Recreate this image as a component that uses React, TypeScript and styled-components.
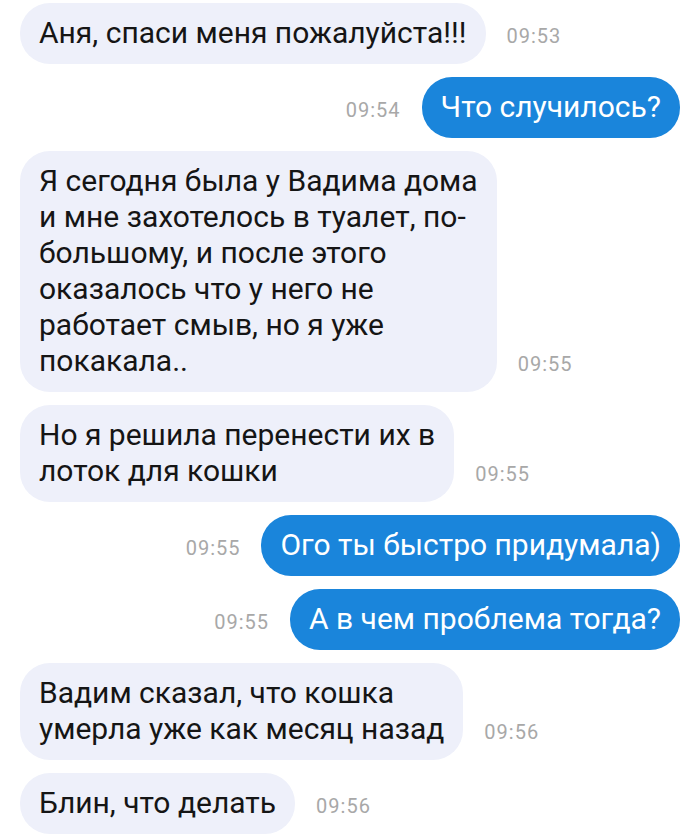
import styled, { createGlobalStyle } from "styled-components";

interface Message {
  id: number;
  text: string;
  time: string;
  mine: boolean;
}

const MESSAGES: Message[] = [
  { id: 1, text: "Аня, спаси меня пожалуйста!!!", time: "09:53", mine: false },
  { id: 2, text: "Что случилось?", time: "09:54", mine: true },
  {
    id: 3,
    text: "Я сегодня была у Вадима дома\nи мне захотелось в туалет, по-\nбольшому, и после этого\nоказалось что у него не\nработает смыв, но я уже\nпокакала..",
    time: "09:55",
    mine: false,
  },
  {
    id: 4,
    text: "Но я решила перенести их в\nлоток для кошки",
    time: "09:55",
    mine: false,
  },
  { id: 5, text: "Ого ты быстро придумала)", time: "09:55", mine: true },
  { id: 6, text: "А в чем проблема тогда?", time: "09:55", mine: true },
  {
    id: 7,
    text: "Вадим сказал, что кошка\nумерла уже как месяц назад",
    time: "09:56",
    mine: false,
  },
  { id: 8, text: "Блин, что делать", time: "09:56", mine: false },
];

const GlobalStyle = createGlobalStyle`
  body {
    margin: 0;
    background: #ffffff;
    font-family: Roboto, "Liberation Sans", sans-serif;
  }
`;

const App = () => {
  return (
    <>
      <GlobalStyle />
      <ChatList>
        {MESSAGES.map((msg) => (
          <Row key={msg.id} $mine={msg.mine}>
            <Bubble $mine={msg.mine}>{msg.text}</Bubble>
            <Time>{msg.time}</Time>
          </Row>
        ))}
      </ChatList>
    </>
  );
};

export default App;

const ChatList = styled.div`
  display: flex;
  flex-direction: column;
  gap: 13px;
  padding: 3px 20px 0 20px;
  width: 700px;
  box-sizing: border-box;
`;

const Row = styled.div<{ $mine: boolean }>`
  display: flex;
  flex-direction: ${({ $mine }) => ($mine ? "row-reverse" : "row")};
  align-items: flex-end;
  gap: 21px;
`;

const Bubble = styled.div<{ $mine: boolean }>`
  white-space: pre-line;
  padding: 12px 19px 13px 19px;
  border-radius: 30px;
  font-size: 30px;
  line-height: 36px;
  color: ${({ $mine }) => ($mine ? "#ffffff" : "#151515")};
  background: ${({ $mine }) => ($mine ? "#1a85db" : "#eef0fa")};
`;

const Time = styled.span`
  font-size: 20px;
  line-height: 36px;
  letter-spacing: 1px;
  padding-bottom: 10px;
  color: #a8a8a8;
`;
